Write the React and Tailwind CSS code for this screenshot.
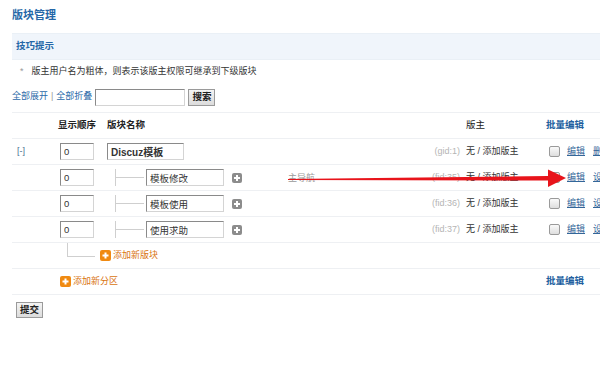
import React from 'react';

const FONT = { fontFamily: '"Liberation Sans", "Noto Sans CJK SC", sans-serif' };

const inputCls =
  'h-[17px] border border-t-[#8a8a8a] border-l-[#8a8a8a] border-r-[#d4d4d4] border-b-[#d4d4d4] bg-white px-[3px] text-[9.5px] leading-[15px] text-[#333]';

const GrayPlus = () => (
  <span className="inline-flex h-[10px] w-[10px] items-center justify-center rounded-[2px] bg-[#8c8c8c]">
    <svg width="8" height="8" viewBox="0 0 8 8"><path d="M4 1v6M1 4h6" stroke="#fff" strokeWidth="2" /></svg>
  </span>
);

const OrangePlus = () => (
  <span className="inline-flex h-[11px] w-[11px] items-center justify-center rounded-[2px] bg-[#f08a12]">
    <svg width="9" height="9" viewBox="0 0 9 9"><path d="M4.5 1.5v6M1.5 4.5h6" stroke="#fff" strokeWidth="2" /></svg>
  </span>
);

const Check = () => (
  <span className="block h-[11px] w-[11px] rounded-[2px] border border-[#9a9a9a] bg-gradient-to-b from-[#fafafa] to-[#dedede]" />
);

const Row = ({ children }) => (
  <div className="flex h-[26px] items-center border-b border-[#eef0f3]">{children}</div>
);

const Tail = ({ id, last }) => (
  <>
    <span className="ml-auto pr-[6px] text-[#b5b5b5]">{id}</span>
    <span className="w-[80px] shrink-0 text-[#333]">无 / 添加版主</span>
    <span className="flex w-[120px] shrink-0 items-center">
      <span className="ml-[3px]"><Check /></span>
      <span className="ml-[7px] text-[#336699] underline">编辑</span>
      <span className="pl-[8px] text-[#336699] underline">{last}</span>
    </span>
  </>
);

const Child = ({ name, id }) => (
  <Row>
    <span className="w-[46px] shrink-0" />
    <span className="w-[49px] shrink-0 pl-[2px]"><input className={`${inputCls} w-[34px]`} defaultValue="0" readOnly /></span>
    <span className="flex h-full w-[39px] shrink-0 items-center pl-[8px]">
      <span className="relative h-[17px] w-[29px] border-l border-[#cfcfcf]">
        <span className="absolute left-0 top-[8px] w-[28px] border-t border-[#cfcfcf]" />
      </span>
    </span>
    <input className={`${inputCls} w-[78px]`} defaultValue={name} readOnly />
    <span className="ml-[8px] flex"><GrayPlus /></span>
    <Tail id={id} last="设置" />
  </Row>
);

export default function App() {
  return (
    <div className="relative h-[378px] w-[600px] overflow-hidden bg-white text-[9px] text-[#333]" style={FONT}>
      <div className="w-[666px] pl-[12px]">
        <div className="pt-[6px] text-[11px] font-bold leading-[18px] text-[#2567a7]">版块管理</div>
        <div className="mt-[9px] flex h-[27px] items-center border-y border-[#eaf0f6] bg-[#f0f5fb] pl-[4px] text-[9.5px] font-bold text-[#2567a7]">
          技巧提示
        </div>
        <div className="flex h-[24px] items-center pl-[8px]">
          <span className="text-[#999]">*</span>
          <span className="ml-[8px]">版主用户名为粗体，则表示该版主权限可继承到下级版块</span>
        </div>
        <div className="mt-[2px] flex h-[22px] items-center">
          <span className="text-[#2b6aa9]">全部展开</span>
          <span className="mx-[3px] text-[#999]">|</span>
          <span className="text-[#2b6aa9]">全部折叠</span>
          <input className={`${inputCls} ml-[3px] h-[16px] w-[90px]`} readOnly />
          <button className="ml-[3px] h-[17px] border border-[#9a9a9a] bg-gradient-to-b from-[#f4f4f4] to-[#dcdcdc] px-[3px] text-[9.5px] font-bold leading-[14px] text-[#222]">
            搜索
          </button>
        </div>

        <div className="mt-[4px] border-t border-[#eef0f3]">
          <Row>
            <span className="w-[46px] shrink-0" />
            <span className="w-[49px] shrink-0 text-[9.5px] font-bold text-[#222]">显示顺序</span>
            <span className="text-[9.5px] font-bold text-[#222]">版块名称</span>
            <span className="ml-auto w-[80px] shrink-0 text-[9.5px] text-[#222]">版主</span>
            <span className="w-[120px] shrink-0 text-[9.5px] font-bold text-[#215e9e]">批量编辑</span>
          </Row>
          <Row>
            <span className="w-[46px] shrink-0 pl-[5px] text-[#4a6f93]">[-]</span>
            <span className="w-[49px] shrink-0 pl-[2px]"><input className={`${inputCls} w-[34px]`} defaultValue="0" readOnly /></span>
            <input className={`${inputCls} w-[77px] font-bold text-[10px]`} defaultValue="Discuz模板" readOnly />
            <Tail id="(gid:1)" last="删除" />
          </Row>
          <div className="relative">
            <Child name="模板修改" id="(fid:35)" />
            <span className="absolute left-[276px] top-[7px] text-[#9a9a9a]">主导航</span>
          </div>
          <Child name="模板使用" id="(fid:36)" />
          <Child name="使用求助" id="(fid:37)" />
          <Row>
            <span className="flex h-full w-[83px] shrink-0 items-start pl-[55px]">
              <span className="h-[14px] w-[28px] border-b border-l border-[#cfcfcf]" />
            </span>
            <span className="ml-[5px] flex"><OrangePlus /></span>
            <span className="ml-[2px] text-[#d9740f]">添加新版块</span>
          </Row>
          <Row>
            <span className="w-[48px] shrink-0" />
            <OrangePlus />
            <span className="ml-[2px] text-[#d9740f]">添加新分区</span>
            <span className="ml-auto w-[120px] shrink-0 text-[9.5px] font-bold text-[#215e9e]">批量编辑</span>
          </Row>
        </div>

        <button className="ml-[4px] mt-[7px] h-[16px] border border-[#9a9a9a] bg-gradient-to-b from-[#f4f4f4] to-[#dcdcdc] px-[3px] text-[9.5px] font-bold leading-[14px] text-[#222]">
          提交
        </button>
      </div>

      <svg className="pointer-events-none absolute left-0 top-0" width="600" height="378">
        <polygon points="288,179 548,176 548,169.5 566,178 548,187 548,180.5 288,180" fill="#e8141b" />
      </svg>
    </div>
  );
}
